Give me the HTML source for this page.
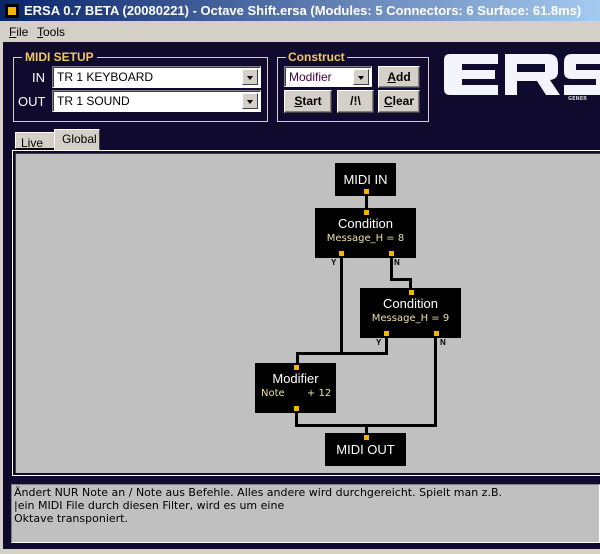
<!DOCTYPE html>
<html><head><meta charset="utf-8"><style>
*{margin:0;padding:0;box-sizing:border-box}
body{width:600px;height:554px;overflow:hidden;background:#d4d0c8;font-family:"Liberation Sans",sans-serif;font-size:11px;position:relative}
.a{position:absolute}
.btn{position:absolute;background:#d4d0c8;border:1px solid;border-color:#fff #404040 #404040 #fff;box-shadow:inset -1px -1px 0 #808080;font-weight:bold;font-size:12px;text-align:center;color:#000}
.sel{position:absolute;background:#fff;border:1px solid;border-color:#808080 #fff #fff #808080;box-shadow:inset 1px 1px 0 #404040;font-size:12px;padding:3px 0 0 4px}
.arr{position:absolute;right:2px;top:2px;width:16px;height:16px;background:#d4d0c8;border:1px solid;border-color:#fff #404040 #404040 #fff}
.arr:after{content:"";position:absolute;left:4px;top:6px;border:3px solid transparent;border-top:4px solid #000;border-bottom:0}
.node{position:absolute;background:#000;color:#fff;text-align:center;font-size:13px}
.node small{display:block;font-size:10px;color:#e8e0a8;font-family:"DejaVu Sans",sans-serif}
.p{position:absolute;width:6px;height:6px;background:#f4b400}
.l{position:absolute;background:#000}
.lb{position:absolute;font-size:8px;font-weight:bold;color:#000}
</style></head><body>
<div class="a" style="left:0;top:0;width:600px;height:21px;background:linear-gradient(to right,#0a246a,#a6caf0)"></div>
<div class="a" style="left:5px;top:4px;width:14px;height:14px;background:#000"></div>
<div class="a" style="left:8px;top:7px;width:8px;height:8px;background:#f4b400"></div>
<div class="a" style="left:24px;top:3px;width:576px;overflow:hidden;color:#fff;font-weight:bold;font-size:13px;white-space:nowrap">ERSA 0.7 BETA (20080221) - Octave Shift.ersa (Modules: 5 Connectors: 6 Surface: 61.8ms)</div>
<div class="a" style="left:9px;top:25px;font-size:12px"><u>F</u>ile</div>
<div class="a" style="left:37px;top:25px;font-size:12px"><u>T</u>ools</div>
<div class="a" style="left:3px;top:42px;width:597px;height:507px;background:#0f0a2e"></div>
<!-- MIDI setup -->
<div class="a" style="left:13px;top:57px;width:255px;height:65px;border:1px solid #d4d0c8"></div>
<div class="a" style="left:22px;top:50px;background:#0f0a2e;color:#f0c860;font-weight:bold;font-size:12px;padding:0 3px">MIDI SETUP</div>
<div class="a" style="left:32px;top:70px;color:#fff;font-size:13px">IN</div>
<div class="a" style="left:18px;top:94px;color:#fff;font-size:13px">OUT</div>
<div class="sel" style="left:52px;top:66px;width:209px;height:22px">TR 1 KEYBOARD<div class="arr"></div></div>
<div class="sel" style="left:52px;top:90px;width:209px;height:22px">TR 1 SOUND<div class="arr"></div></div>
<!-- Construct -->
<div class="a" style="left:277px;top:57px;width:152px;height:65px;border:1px solid #d4d0c8"></div>
<div class="a" style="left:286px;top:50px;background:#0f0a2e;color:#f0c860;font-weight:bold;font-size:12px;padding:0 2px">Construct</div>
<div class="sel" style="left:284px;top:66px;width:88px;height:21px;color:#400040">Modifier<div class="arr"></div></div>
<div class="btn" style="left:378px;top:66px;width:42px;height:22px;line-height:20px"><u>A</u>dd</div>
<div class="btn" style="left:284px;top:90px;width:48px;height:23px;line-height:21px"><u>S</u>tart</div>
<div class="btn" style="left:337px;top:90px;width:37px;height:23px;line-height:21px">/!\</div>
<div class="btn" style="left:378px;top:90px;width:42px;height:23px;line-height:21px"><u>C</u>lear</div>
<!-- logo -->
<svg class="a" style="left:440px;top:50px" width="160" height="60">
<g fill="#f4f4fc">
<path d="M10 4 H58 V14 H22 V20 H55 V29 H22 V35 H58 V45 H10 Q4 45 4 39 V10 Q4 4 10 4Z"/>
<path d="M65 4 H108 Q118 4 118 14 V22 Q118 29 110 30 L120 45 H106 L97 31 H77 V45 H65Z M77 14 V22 H105 V14Z"/>
<path d="M132 4 H165 V14 H136 V20 H160 Q168 20 168 28 V38 Q168 45 160 45 H124 V35 H156 V29 H132 Q124 29 124 22 V12 Q124 4 132 4Z"/>
</g>
<text x="128" y="50" font-size="5" fill="#ccc" font-family="DejaVu Sans" font-weight="bold">GENER</text>
</svg>
<!-- tabs -->
<div class="a" style="left:15px;top:132px;width:40px;height:17px;background:#d4d0c8;border:1px solid;border-color:#fff #404040 #000 #fff;font-size:12px;padding:3px 0 0 5px">Live</div>
<div class="a" style="left:54px;top:129px;width:46px;height:21px;background:#d4d0c8;border:1px solid;border-color:#fff #404040 transparent #fff;font-size:12px;padding:2px 0 0 7px">Global</div>
<!-- canvas -->
<div class="a" style="left:12px;top:150px;width:590px;height:326px;border:1px solid #fff;background:#0f0a2e"></div>
<div class="a" style="left:15px;top:153px;width:587px;height:320px;background:#c0c0c0;border-top:1px solid #404040;border-left:1px solid #404040"></div>
<!-- lines -->
<div class="l" style="left:365px;top:196px;width:3px;height:12px"></div>
<div class="l" style="left:340px;top:257px;width:3px;height:98px"></div>
<div class="l" style="left:296px;top:352px;width:91px;height:3px"></div>
<div class="l" style="left:385px;top:337px;width:3px;height:18px"></div>
<div class="l" style="left:296px;top:352px;width:3px;height:12px"></div>
<div class="l" style="left:390px;top:257px;width:3px;height:24px"></div>
<div class="l" style="left:390px;top:278px;width:21px;height:3px"></div>
<div class="l" style="left:409px;top:278px;width:3px;height:10px"></div>
<div class="l" style="left:434px;top:337px;width:3px;height:90px"></div>
<div class="l" style="left:295px;top:424px;width:142px;height:3px"></div>
<div class="l" style="left:295px;top:412px;width:3px;height:15px"></div>
<div class="l" style="left:365px;top:424px;width:3px;height:10px"></div>
<!-- nodes -->
<div class="node" style="left:335px;top:163px;width:61px;height:33px;line-height:33px">MIDI IN</div>
<div class="node" style="left:315px;top:208px;width:101px;height:50px;padding-top:8px">Condition<small style="margin-top:2px">Message_H = 8</small></div>
<div class="node" style="left:360px;top:288px;width:101px;height:50px;padding-top:8px">Condition<small style="margin-top:2px">Message_H = 9</small></div>
<div class="node" style="left:255px;top:363px;width:81px;height:50px;padding-top:8px">Modifier<small style="margin-top:2px;text-align:left;padding-left:6px">Note&nbsp;&nbsp;&nbsp;&nbsp;&nbsp;&nbsp;&nbsp;+ 12</small></div>
<div class="node" style="left:325px;top:433px;width:81px;height:33px;line-height:33px">MIDI OUT</div>
<div class="p" style="left:364px;top:189px;width:5px;height:5px"></div>
<div class="p" style="left:364px;top:210px;width:5px;height:5px"></div>
<div class="p" style="left:339px;top:251px;width:5px;height:5px"></div>
<div class="p" style="left:389px;top:251px;width:5px;height:5px"></div>
<div class="p" style="left:409px;top:290px;width:5px;height:5px"></div>
<div class="p" style="left:384px;top:331px;width:5px;height:5px"></div>
<div class="p" style="left:434px;top:331px;width:5px;height:5px"></div>
<div class="p" style="left:294px;top:365px;width:5px;height:5px"></div>
<div class="p" style="left:294px;top:406px;width:5px;height:5px"></div>
<div class="p" style="left:364px;top:435px;width:5px;height:5px"></div>
<div class="lb" style="left:331px;top:258px">Y</div>
<div class="lb" style="left:394px;top:258px">N</div>
<div class="lb" style="left:376px;top:338px">Y</div>
<div class="lb" style="left:440px;top:338px">N</div>
<!-- text area -->
<div class="a" style="left:11px;top:484px;width:589px;height:59px;background:#c0c0c0;border:1px solid;border-color:#808080 #fff #fff #808080;font-family:'DejaVu Sans',sans-serif;font-size:11px;line-height:13px;padding:1px 2px;color:#000">Ändert NUR Note an / Note aus Befehle. Alles andere wird durchgereicht. Spielt man z.B.<br>|ein MIDI File durch diesen Filter, wird es um eine<br>Oktave transponiert.</div>
</body></html>
